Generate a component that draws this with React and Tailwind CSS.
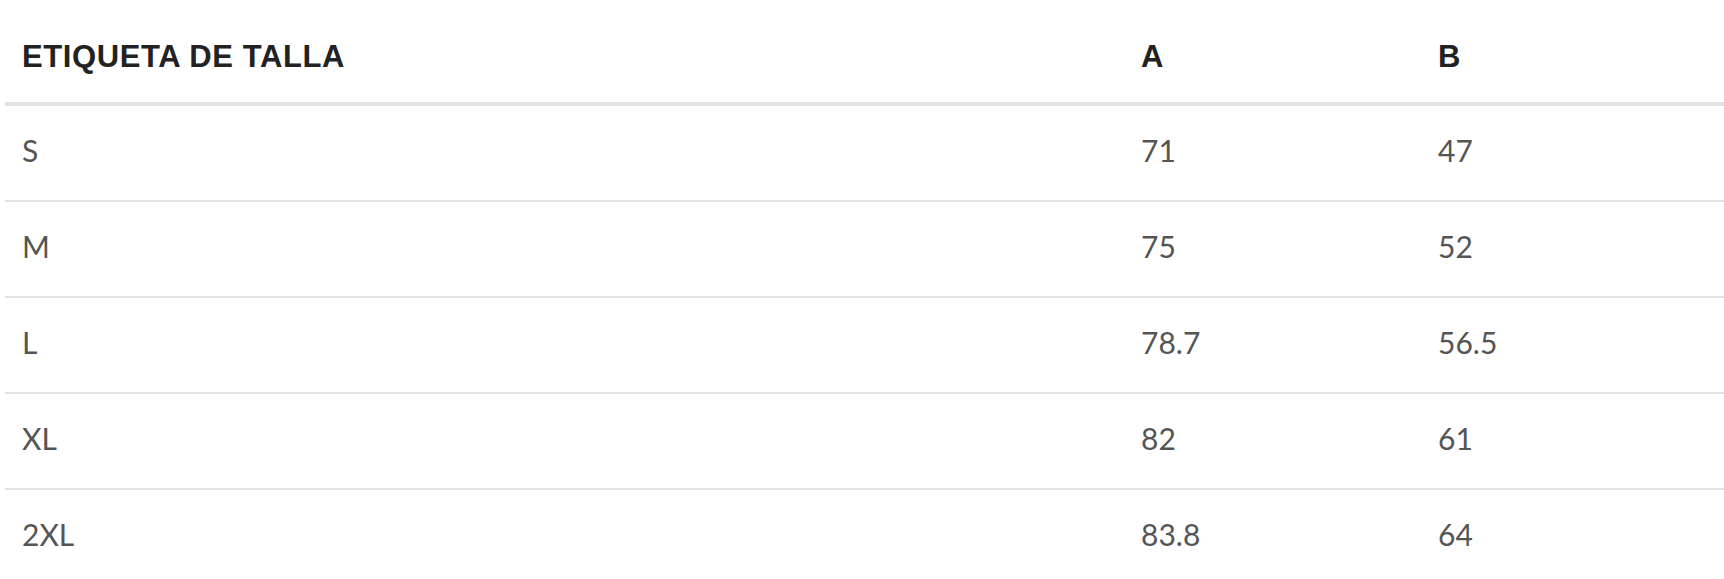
const rows = [
  { label: 'S', a: '71', b: '47' },
  { label: 'M', a: '75', b: '52' },
  { label: 'L', a: '78.7', b: '56.5' },
  { label: 'XL', a: '82', b: '61' },
  { label: '2XL', a: '83.8', b: '64' },
]

const cols = 'grid grid-cols-[1119px_297px_1fr]'

function App() {
  return (
    <div className="min-h-screen bg-white">
      <div className="ml-[5px]">
        <div
          className={`${cols} h-[106px] items-center border-b-4 border-[#e3e3e3] pt-[12px] text-[31px] font-bold tracking-[0.6px] text-[#222222]`}
          style={{ fontFamily: '"Liberation Sans", Arial, sans-serif' }}
        >
          <div className="pl-[17px]">ETIQUETA DE TALLA</div>
          <div className="pl-[17px]">A</div>
          <div className="pl-[17px]">B</div>
        </div>

        {rows.map((row) => (
          <div
            key={row.label}
            className={`${cols} h-[96px] items-center border-b-2 border-[#e3e3e3] pb-[6px] text-[30px] text-[#555555]`}
            style={{ fontFamily: 'Lato, "Open Sans", sans-serif' }}
          >
            <div className="pl-[17px]">{row.label}</div>
            <div className="pl-[17px]">{row.a}</div>
            <div className="pl-[17px]">{row.b}</div>
          </div>
        ))}
      </div>
    </div>
  )
}

export default App
